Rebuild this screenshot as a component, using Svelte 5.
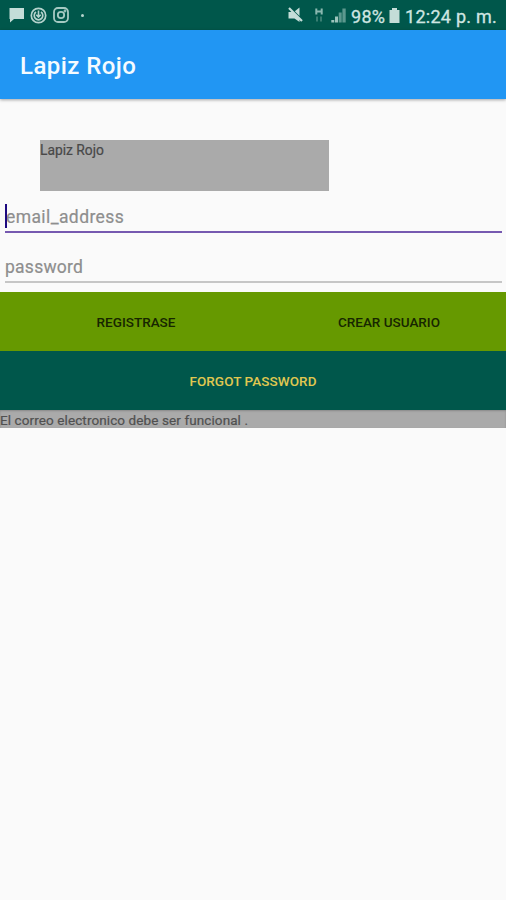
<script>
  let email = '';
  let password = '';
</script>

<div class="screen">
  <div class="status">
    <div class="notifications">
      <svg width="16" height="16" viewBox="0 0 16 16">
        <path d="M0.500 1h14.500v11H5L1 15.500V12H0.500z" fill="#c4ddd8" />
      </svg>
      <svg width="17" height="17" viewBox="0 0 17 17" fill="none" stroke="#b5d3cd">
        <circle cx="8.500" cy="8.500" r="7.200" stroke-width="1.700" />
        <path d="M6 5a4.300 4.300 0 1 0 5 0" stroke-width="1.700" />
        <path d="M8.500 3.500v6M6.300 7.800l2.200 2.200 2.200-2.200" stroke-width="1.600" />
      </svg>
      <svg width="16" height="16" viewBox="0 0 16 16" fill="none" stroke="#a5c9c2" stroke-width="1.800">
        <rect x="1" y="1" width="14" height="14" rx="4" />
        <circle cx="8" cy="8" r="3.200" />
        <circle cx="12" cy="4" r="0.500" />
      </svg>
      <span class="dot"></span>
    </div>
    <div class="system">
      <svg class="mute" width="15" height="16" viewBox="0 0 15 16">
        <path d="M0.500 5h4l7 7v3L6.500 11.500h-6zM6.800 4.200L11.500 0.500v8.500z" fill="#c4ddd8" />
        <path d="M1 1l13 13" stroke="#c4ddd8" stroke-width="2.200" />
      </svg>
      <svg class="data" width="8" height="15" viewBox="0 0 8 15">
        <path d="M1.300 0.500v6M6.700 0.500v6M1 3.500h6" stroke="#8ab8b0" stroke-width="2" />
        <path d="M2 8.500v5M6 8.500v5" stroke="#3f8377" stroke-width="1.800" />
      </svg>
      <svg class="signal" width="15" height="15" viewBox="0 0 15 15">
        <path d="M0.300 12h3v2.500h-3zM4 8.500h3v6H4z" fill="#9cc4bc" />
        <path d="M7.700 4.500h3v10h-3zM11.400 0.500h3.300v14h-3.300z" fill="#5c988e" />
      </svg>
      <span class="percent">98%</span>
      <svg class="battery" width="11" height="15" viewBox="0 0 11 15">
        <path d="M3 0h5v2h2.500v13H0.500V2H3z" fill="#c4ddd8" />
      </svg>
      <span class="clock">12:24 p. m.</span>
    </div>
  </div>

  <header><span>Lapiz Rojo</span></header>

  <main>
    <div class="banner"><span>Lapiz Rojo</span></div>

    <div class="field active">
      <span class="caret"></span>
      <input class="email" type="text" bind:value={email} placeholder="email_address" />
    </div>
    <div class="field">
      <input type="password" bind:value={password} placeholder="password" />
    </div>

    <div class="actions">
      <button class="login" type="button"><span>REGISTRASE</span></button>
      <button class="create" type="button"><span>CREAR USUARIO</span></button>
    </div>
    <button class="forgot" type="button"><span>FORGOT PASSWORD</span></button>
    <p><span>El correo electronico debe ser funcional .</span></p>
  </main>
</div>

<style>
  :global(body) {
    background: #fafafa;
  }

  .screen {
    height: 900px;
    overflow: hidden;
    background: #fafafa;
    font-family: Roboto, sans-serif;
  }

  .status {
    display: flex;
    justify-content: space-between;
    height: 30px;
    background: #00574b;
    color: #cfe5e1;
  }

  .notifications, .system {
    display: flex;
    align-items: center;
  }

  .notifications {
    gap: 5.500px;
    padding-left: 8.500px;
  }

  .dot {
    width: 3px;
    height: 3px;
    margin-left: 6.500px;
    border-radius: 50%;
    background: #b5d3cd;
  }

  .system {
    padding-right: 9px;
    font-size: 18px;
    line-height: 30px;
    white-space: nowrap;
  }

  .system span {
    padding-top: 3px;
  }

  .percent {
    letter-spacing: 0.200px;
    -webkit-text-stroke: 0.300px;
  }

  .clock {
    letter-spacing: 0.250px;
    -webkit-text-stroke: 0.300px;
  }

  .mute {
    margin-right: 12px;
  }

  .data {
    margin-right: 8px;
  }

  .signal {
    margin-right: 5px;
  }

  .battery {
    margin: 0 5px 0 4px;
  }

  header {
    display: flex;
    align-items: center;
    height: 67px;
    padding: 2px 0 0 20px;
    background: #2196f3;
    color: #f5fbff;
    font-size: 24px;
    font-weight: 500;
    letter-spacing: 0.450px;
    box-shadow: 0 1px 3px rgba(0, 0, 0, 0.35);
  }

  main {
    padding-top: 41px;
  }

  .banner {
    width: 289px;
    height: 51px;
    margin-left: 40px;
    background: #aaaaaa;
    color: #484848;
    font-size: 13.800px;
    line-height: 20px;
    -webkit-text-stroke: 0.200px;
  }

  .field {
    position: relative;
    display: flex;
    align-items: center;
    height: 31px;
    margin: 9px 4px 0 5px;
    border-bottom: 2px solid #c6c6c6;
  }

  .active {
    border-bottom-color: #7659b0;
  }

  .active + .field {
    height: 30px;
    margin-top: 18px;
  }

  .field input {
    width: 100%;
    height: 24px;
    padding: 2px 0 0;
    border: none;
    outline: none;
    background: none;
    font-family: inherit;
    font-size: 17.500px;
    letter-spacing: 0.250px;
  }

  .field .email {
    padding-left: 1px;
    letter-spacing: 0.400px;
  }

  .field input::placeholder {
    color: #8e8e8e;
    opacity: 1;
    -webkit-text-stroke: 0.200px;
  }

  .caret {
    position: absolute;
    top: 4px;
    left: 0;
    width: 2px;
    height: 24px;
    background: #1d0a80;
  }

  button {
    height: 59px;
    padding: 0;
    border: none;
    font-family: inherit;
    font-size: 13.500px;
    font-weight: 500;
  }

  .actions {
    display: flex;
    margin-top: 9px;
    background: #669900;
  }

  .actions button {
    background: none;
    color: #172600;
  }

  .login {
    width: 272px;
  }

  .create {
    flex: 1;
  }

  .forgot {
    display: block;
    width: 100%;
    background: #00574b;
    color: #e0c850;
    letter-spacing: 0.070px;
  }

  p {
    height: 18px;
    margin: 0;
    background: #aaaaaa;
    color: #505050;
    font-size: 13.500px;
    letter-spacing: 0.100px;
    line-height: 20px;
    box-shadow: inset 0 1px 2px rgba(0, 0, 0, 0.200);
    -webkit-text-stroke: 0.200px;
  }
</style>
